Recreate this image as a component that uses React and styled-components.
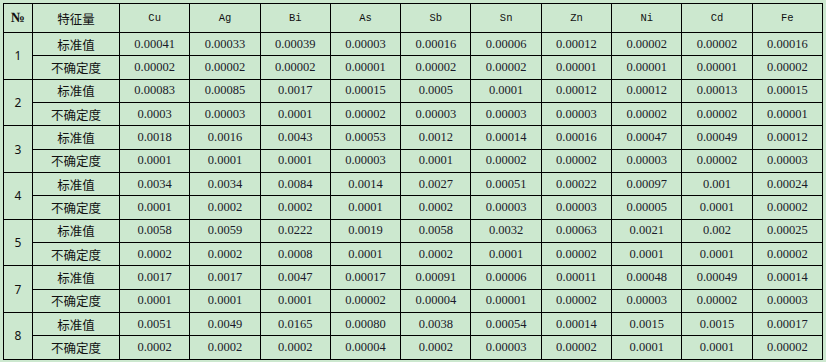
import React from "react";
import styled, { createGlobalStyle } from "styled-components";

const GlobalStyle = createGlobalStyle`
  html, body {
    margin: 0;
    padding: 0;
    background: #cce8cf;
  }
  body {
    padding: 3px 0 0 3px;
  }
`;

const Table = styled.table`
  border-collapse: collapse;
  table-layout: fixed;
  width: 820px;
  background: #cce8cf;
  color: #111;
`;

const HeadRow = styled.tr`
  height: 29px;
`;

const DataRow = styled.tr`
  height: 23.33px;
`;

const Cell = styled.td`
  border: 1px solid #000;
  padding: 0;
  text-align: center;
  vertical-align: middle;
  white-space: nowrap;
`;

const HeadCell = styled(Cell).attrs({ as: "th" })`
  font-weight: normal;
  font-family: ${(p) =>
    p.$cjk
      ? '"Noto Sans CJK SC", "Noto Sans", sans-serif'
      : '"Liberation Mono", "DejaVu Sans Mono", monospace'};
  font-size: ${(p) => (p.$cjk ? "12.5px" : "10.5px")};
  ${(p) => p.$no && "font-size: 14px; font-family: 'Liberation Serif', serif; font-weight: bold;"}
`;

const GroupCell = styled(Cell)`
  font-family: "Noto Sans", "DejaVu Sans", sans-serif;
  font-size: 12px;
`;

const LabelCell = styled(Cell)`
  font-family: "Noto Sans CJK SC", sans-serif;
  font-size: 12.5px;
`;

const NumCell = styled(Cell)`
  font-family: "Liberation Serif", "Times New Roman", serif;
  font-size: 12.5px;
  color: #1a1a2a;
`;

const elements = ["Cu", "Ag", "Bi", "As", "Sb", "Sn", "Zn", "Ni", "Cd", "Fe"];

const groups = [
  {
    id: "1",
    std: ["0.00041", "0.00033", "0.00039", "0.00003", "0.00016", "0.00006", "0.00012", "0.00002", "0.00002", "0.00016"],
    unc: ["0.00002", "0.00002", "0.00002", "0.00001", "0.00002", "0.00002", "0.00001", "0.00001", "0.00001", "0.00002"],
  },
  {
    id: "2",
    std: ["0.00083", "0.00085", "0.0017", "0.00015", "0.0005", "0.0001", "0.00012", "0.00012", "0.00013", "0.00015"],
    unc: ["0.0003", "0.00003", "0.0001", "0.00002", "0.00003", "0.00003", "0.00003", "0.00002", "0.00002", "0.00001"],
  },
  {
    id: "3",
    std: ["0.0018", "0.0016", "0.0043", "0.00053", "0.0012", "0.00014", "0.00016", "0.00047", "0.00049", "0.00012"],
    unc: ["0.0001", "0.0001", "0.0001", "0.00003", "0.0001", "0.00002", "0.00002", "0.00003", "0.00002", "0.00003"],
  },
  {
    id: "4",
    std: ["0.0034", "0.0034", "0.0084", "0.0014", "0.0027", "0.00051", "0.00022", "0.00097", "0.001", "0.00024"],
    unc: ["0.0001", "0.0002", "0.0002", "0.0001", "0.0002", "0.00003", "0.00003", "0.00005", "0.0001", "0.00002"],
  },
  {
    id: "5",
    std: ["0.0058", "0.0059", "0.0222", "0.0019", "0.0058", "0.0032", "0.00063", "0.0021", "0.002", "0.00025"],
    unc: ["0.0002", "0.0002", "0.0008", "0.0001", "0.0002", "0.0001", "0.00002", "0.0001", "0.0001", "0.00002"],
  },
  {
    id: "7",
    std: ["0.0017", "0.0017", "0.0047", "0.00017", "0.00091", "0.00006", "0.00011", "0.00048", "0.00049", "0.00014"],
    unc: ["0.0001", "0.0001", "0.0001", "0.00002", "0.00004", "0.00001", "0.00002", "0.00003", "0.00002", "0.00003"],
  },
  {
    id: "8",
    std: ["0.0051", "0.0049", "0.0165", "0.00080", "0.0038", "0.00054", "0.00014", "0.0015", "0.0015", "0.00017"],
    unc: ["0.0002", "0.0002", "0.0002", "0.00004", "0.0002", "0.00003", "0.00002", "0.0001", "0.0001", "0.00002"],
  },
];

export default function App() {
  return (
    <>
      <GlobalStyle />
      <Table>
        <colgroup>
          <col style={{ width: 29 }} />
          <col style={{ width: 87 }} />
          {elements.map((e) => (
            <col key={e} />
          ))}
        </colgroup>
        <thead>
          <HeadRow>
            <HeadCell $no>№</HeadCell>
            <HeadCell $cjk>特征量</HeadCell>
            {elements.map((e) => (
              <HeadCell key={e}>{e}</HeadCell>
            ))}
          </HeadRow>
        </thead>
        <tbody>
          {groups.map((g) => (
            <React.Fragment key={g.id}>
              <DataRow>
                <GroupCell rowSpan={2}>{g.id}</GroupCell>
                <LabelCell>标准值</LabelCell>
                {g.std.map((v, i) => (
                  <NumCell key={i}>{v}</NumCell>
                ))}
              </DataRow>
              <DataRow>
                <LabelCell>不确定度</LabelCell>
                {g.unc.map((v, i) => (
                  <NumCell key={i}>{v}</NumCell>
                ))}
              </DataRow>
            </React.Fragment>
          ))}
        </tbody>
      </Table>
    </>
  );
}
